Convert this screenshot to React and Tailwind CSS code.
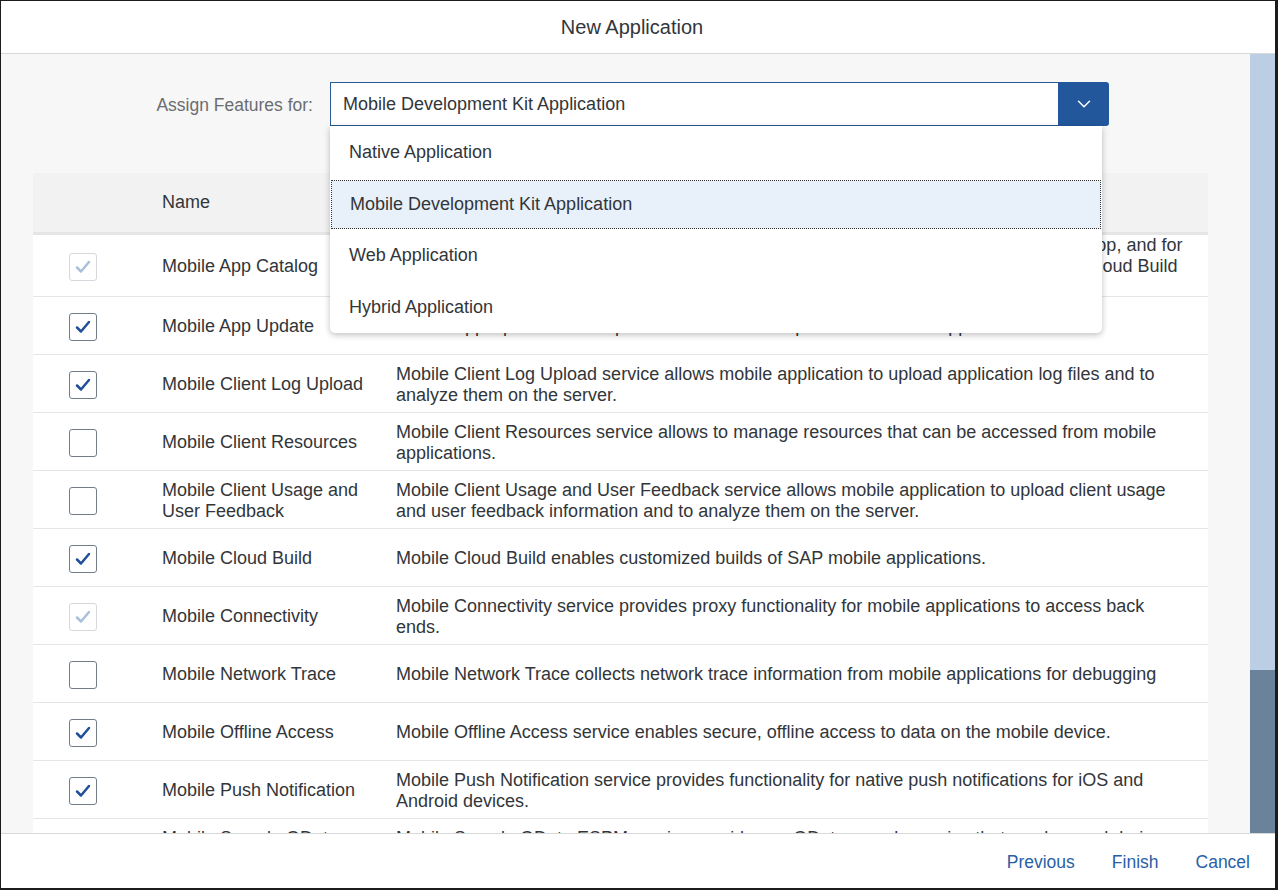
import React from "react";
import { ChevronDown } from "lucide-react";

const features = [
  {
    name: ["Mobile App Catalog"],
    desc: [
      "Mobile App Catalog service allows users to install mobile applications from the catalog app, and for",
      "administrators to publish and manage applications that have been created with Mobile Cloud Build",
      "to the catalog.",
    ],
    state: "disabled",
    h: "h-[62px]",
  },
  {
    name: ["Mobile App Update"],
    desc: ["Mobile App Update service provides over-the-air updates for mobile applications."],
    state: "checked",
  },
  {
    name: ["Mobile Client Log Upload"],
    desc: [
      "Mobile Client Log Upload service allows mobile application to upload application log files and to",
      "analyze them on the server.",
    ],
    state: "checked",
  },
  {
    name: ["Mobile Client Resources"],
    desc: [
      "Mobile Client Resources service allows to manage resources that can be accessed from mobile",
      "applications.",
    ],
    state: "off",
  },
  {
    name: ["Mobile Client Usage and", "User Feedback"],
    desc: [
      "Mobile Client Usage and User Feedback service allows mobile application to upload client usage",
      "and user feedback information and to analyze them on the server.",
    ],
    state: "off",
  },
  {
    name: ["Mobile Cloud Build"],
    desc: ["Mobile Cloud Build enables customized builds of SAP mobile applications."],
    state: "checked",
  },
  {
    name: ["Mobile Connectivity"],
    desc: [
      "Mobile Connectivity service provides proxy functionality for mobile applications to access back",
      "ends.",
    ],
    state: "disabled",
  },
  {
    name: ["Mobile Network Trace"],
    desc: ["Mobile Network Trace collects network trace information from mobile applications for debugging"],
    state: "off",
  },
  {
    name: ["Mobile Offline Access"],
    desc: ["Mobile Offline Access service enables secure, offline access to data on the mobile device."],
    state: "checked",
  },
  {
    name: ["Mobile Push Notification"],
    desc: [
      "Mobile Push Notification service provides functionality for native push notifications for iOS and",
      "Android devices.",
    ],
    state: "checked",
  },
  {
    name: ["Mobile Sample OData", "ESPM"],
    desc: [
      "Mobile Sample OData ESPM service provides an OData sample service that can be used during",
      "development.",
    ],
    state: "off",
  },
];

const options = [
  "Native Application",
  "Mobile Development Kit Application",
  "Web Application",
  "Hybrid Application",
];

function CheckBox({ state }) {
  const disabled = state === "disabled";
  const checked = state !== "off";
  return (
    <div
      className={
        disabled
          ? "w-[28px] h-[28px] rounded-[3px] border border-[#d5d9dd] bg-white flex items-center justify-center"
          : "w-[28px] h-[28px] rounded-[3px] border border-[#737d88] bg-white flex items-center justify-center"
      }
    >
      {checked && (
        <svg width="20" height="20" viewBox="0 0 20 20" fill="none">
          <path
            d="M4 10.5 L8 14.5 L16 5"
            stroke={disabled ? "#a9bfdc" : "#1f4f99"}
            strokeWidth="2.5"
            strokeLinecap="round"
            strokeLinejoin="round"
          />
        </svg>
      )}
    </div>
  );
}

export default function App() {
  return (
    <div
      className="w-[1278px] h-[890px] bg-[#1c1c1c] pl-[1px] pt-[1px] pr-[3px] pb-[2px] text-[#32363a]"
      style={{ fontFamily: '"Liberation Sans", Arial, sans-serif' }}
    >
      <div className="w-full h-full bg-white flex flex-col">
        {/* header */}
        <div className="h-[53px] shrink-0 border-b border-[#d9d9d9] flex items-center justify-center pr-[12px] text-[20px]">
          New Application
        </div>

        {/* body */}
        <div className="flex-1 flex min-h-0 bg-[#f7f7f7]">
          <div className="flex-1 overflow-hidden pt-[28px]">
            <div className="flex items-center">
              <div className="w-[312px] text-right text-[17.5px] text-[#6a6d70] pt-[2px]">Assign Features for:</div>
              <div className="relative ml-[17px] w-[779px] h-[44px] flex">
                <div className="flex-1 bg-white border border-[#2b5a96] border-r-0 flex items-center pl-[12px] text-[18px]">
                  Mobile Development Kit Application
                </div>
                <div className="w-[51px] bg-[#22579c] rounded-r-[3px] flex items-center justify-center">
                  <ChevronDown size={22} strokeWidth={1.6} color="#ffffff" />
                </div>

                <div className="absolute left-0 top-[44px] w-[772px] h-[207px] bg-white rounded-b-[5px] shadow-[0_2px_6px_rgba(0,0,0,0.25)] z-10 pt-[1px] flex flex-col">
                  {options.map((o, i) =>
                    i === 1 ? (
                      <div key={o} className="h-[51.5px] mx-[1px] py-[1px]">
                        <div className="h-full bg-[#e8f0f9] border border-dotted border-[#333] flex items-center pl-[18px] text-[18px]">
                          {o}
                        </div>
                      </div>
                    ) : (
                      <div key={o} className="h-[51.5px] flex items-center pl-[19px] text-[18px]">
                        {o}
                      </div>
                    )
                  )}
                </div>
              </div>
            </div>

            {/* table */}
            <div className="mt-[47px] ml-[32px] w-[1175px]">
              <div className="h-[62px] bg-[#f2f2f2] border-b-[3px] border-[#e5e5e5] flex items-center text-[18px]">
                <div className="w-[129px]" />
                <div>Name</div>
              </div>
              {features.map((f) => (
                <div
                  key={f.name.join(" ")}
                  className={`${f.h || "h-[58px]"} shrink-0 bg-white border-b border-[#e5e5e5] flex items-center pt-[2px] text-[18px] leading-[21px]`}
                >
                  <div className="w-[129px] pl-[36px] shrink-0">
                    <CheckBox state={f.state} />
                  </div>
                  <div className="w-[234px] shrink-0 pr-[14px]">
                    {f.name.map((l) => (
                      <div key={l} className="whitespace-nowrap">{l}</div>
                    ))}
                  </div>
                  <div className="flex-1">
                    {f.desc.map((l) => (
                      <div key={l} className="whitespace-nowrap">{l}</div>
                    ))}
                  </div>
                </div>
              ))}
            </div>
          </div>

          {/* scrollbar */}
          <div className="w-[25px] shrink-0 flex flex-col">
            <div className="h-[616px] bg-[#bccee3]" />
            <div className="flex-1 bg-[#6b829b]" />
          </div>
        </div>

        {/* footer */}
        <div className="h-[55px] shrink-0 border-t border-[#d9d9d9] bg-white flex items-center justify-end pr-[25px] gap-[37px] pt-[2px] text-[17.5px] text-[#2a5fa5]">
          <span>Previous</span>
          <span>Finish</span>
          <span>Cancel</span>
        </div>
      </div>
    </div>
  );
}
